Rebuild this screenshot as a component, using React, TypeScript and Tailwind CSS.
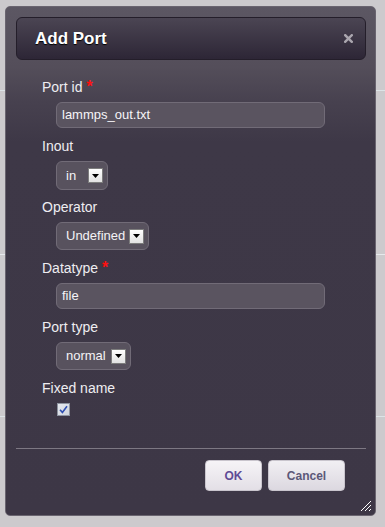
import React from "react";

function Arrow() {
  return (
    <div className="w-[15px] h-[15px] border border-[#7d7d7d] bg-[linear-gradient(180deg,#ffffff,#e2e2e2)] flex items-center justify-center">
      <svg width="7" height="4" viewBox="0 0 7 4">
        <path d="M0 0 L7 0 L3.5 4 Z" fill="#000" />
      </svg>
    </div>
  );
}

function Select({ value, w, h }: { value: string; w: string; h: string }) {
  return (
    <div
      className={`${w} ${h} ml-[14px] rounded-[6px] border border-[#716b77] bg-[#58525e] flex items-center justify-between pl-[9px] pr-[4px] text-[13px] text-[#f4f3f6]`}
    >
      <span>{value}</span>
      <Arrow />
    </div>
  );
}

function Label({ text, req }: { text: string; req?: boolean }) {
  return (
    <div className="h-[20px] leading-[20px] text-[14px] text-[#eeedf1]">
      {text}
      {req && <span className="text-[#ff1010] font-bold text-[16px] ml-[4px]">*</span>}
    </div>
  );
}

function Input({ value }: { value: string }) {
  return (
    <div className="ml-[14px] w-[269px] h-[26px] rounded-[6px] border border-[#716b77] bg-[#5a5460] flex items-center pl-[5px] text-[13px] text-[#f6f5f8]">
      {value}
    </div>
  );
}

export default function App() {
  return (
    <div
      className="relative w-[385px] h-[527px] bg-[#cccacd] overflow-hidden pt-[6px] pl-[5px]"
      style={{ fontFamily: '"Liberation Sans", Arial, sans-serif' }}
    >
      <div className="absolute left-0 right-0 top-[90px] h-px bg-[#dde4e7]" />
      <div className="absolute left-0 right-0 top-[254px] h-px bg-[#e6e9ec]" />
      <div className="absolute left-0 right-0 top-[416px] h-px bg-[#dde4e7]" />

      <div className="relative w-[371px] h-[510px] rounded-[5px] border border-[#6a6570] bg-[linear-gradient(180deg,#5c5763_0px,#544e5a_60px,#47414f_95px,#3e3847_135px,#3d3746_100%)] flex flex-col">
        <div className="mt-[10px] ml-[10px] w-[350px] h-[43px] rounded-[6px] border border-[#241e2a] bg-[linear-gradient(180deg,#4b4553,#2d2636)] flex items-center justify-between pl-[18px] pr-[12px]">
          <span className="text-[17px] font-bold text-white [text-shadow:0_1px_1px_#000]">
            Add Port
          </span>
          <svg width="9" height="9" viewBox="0 0 9 9">
            <path d="M1.2 1.2 L7.8 7.8 M7.8 1.2 L1.2 7.8" stroke="#aaa6ae" strokeWidth="2.4" strokeLinecap="square" />
          </svg>
        </div>

        <div className="pl-[36px] flex flex-col items-start">
          <div className="mt-[17px]">
            <Label text="Port id" req />
          </div>
          <div className="mt-[5px]">
            <Input value="lammps_out.txt" />
          </div>
          <div className="mt-[8px]">
            <Label text="Inout" />
          </div>
          <div className="mt-[5px]">
            <Select value="in" w="w-[52px]" h="h-[29px]" />
          </div>
          <div className="mt-[7px]">
            <Label text="Operator" />
          </div>
          <div className="mt-[5px]">
            <Select value="Undefined" w="w-[93px]" h="h-[28px]" />
          </div>
          <div className="mt-[8px]">
            <Label text="Datatype" req />
          </div>
          <div className="mt-[5px]">
            <Input value="file" />
          </div>
          <div className="mt-[8px]">
            <Label text="Port type" />
          </div>
          <div className="mt-[5px]">
            <Select value="normal" w="w-[75px]" h="h-[28px]" />
          </div>
          <div className="mt-[8px]">
            <Label text="Fixed name" />
          </div>
          <div className="mt-[5px] ml-[15px] w-[13px] h-[13px] border border-[#8e94a0] bg-[linear-gradient(135deg,#e6e9ef,#cfd4dd)] flex items-center justify-center">
            <svg width="9" height="9" viewBox="0 0 9 9">
              <path d="M1 4.8 L3.4 7.4 L8 1.2" stroke="#2f4fb0" strokeWidth="1.6" fill="none" />
            </svg>
          </div>
        </div>

        <div className="mt-[32px] ml-[10px] w-[350px] h-px bg-[#7d7883]" />

        <div className="mt-[11px] flex justify-end gap-[6px] pr-[30px]">
          <div className="w-[57px] h-[31px] rounded-[4px] border border-[#c9c5cd] bg-[linear-gradient(180deg,#f6f4f7,#e3dfe6)] flex items-center justify-center text-[12px] font-bold text-[#5f4c96]">
            OK
          </div>
          <div className="w-[77px] h-[31px] rounded-[4px] border border-[#c9c5cd] bg-[linear-gradient(180deg,#f1eff3,#dcd8e0)] flex items-center justify-center text-[12px] font-bold text-[#5c5878]">
            Cancel
          </div>
        </div>

        <svg className="absolute right-[3px] bottom-[3px]" width="12" height="12" viewBox="0 0 12 12">
          <path d="M11 1 L1 11 M11 5 L5 11 M11 9 L9 11" stroke="#ffffff" strokeWidth="1" />
        </svg>
      </div>
    </div>
  );
}
